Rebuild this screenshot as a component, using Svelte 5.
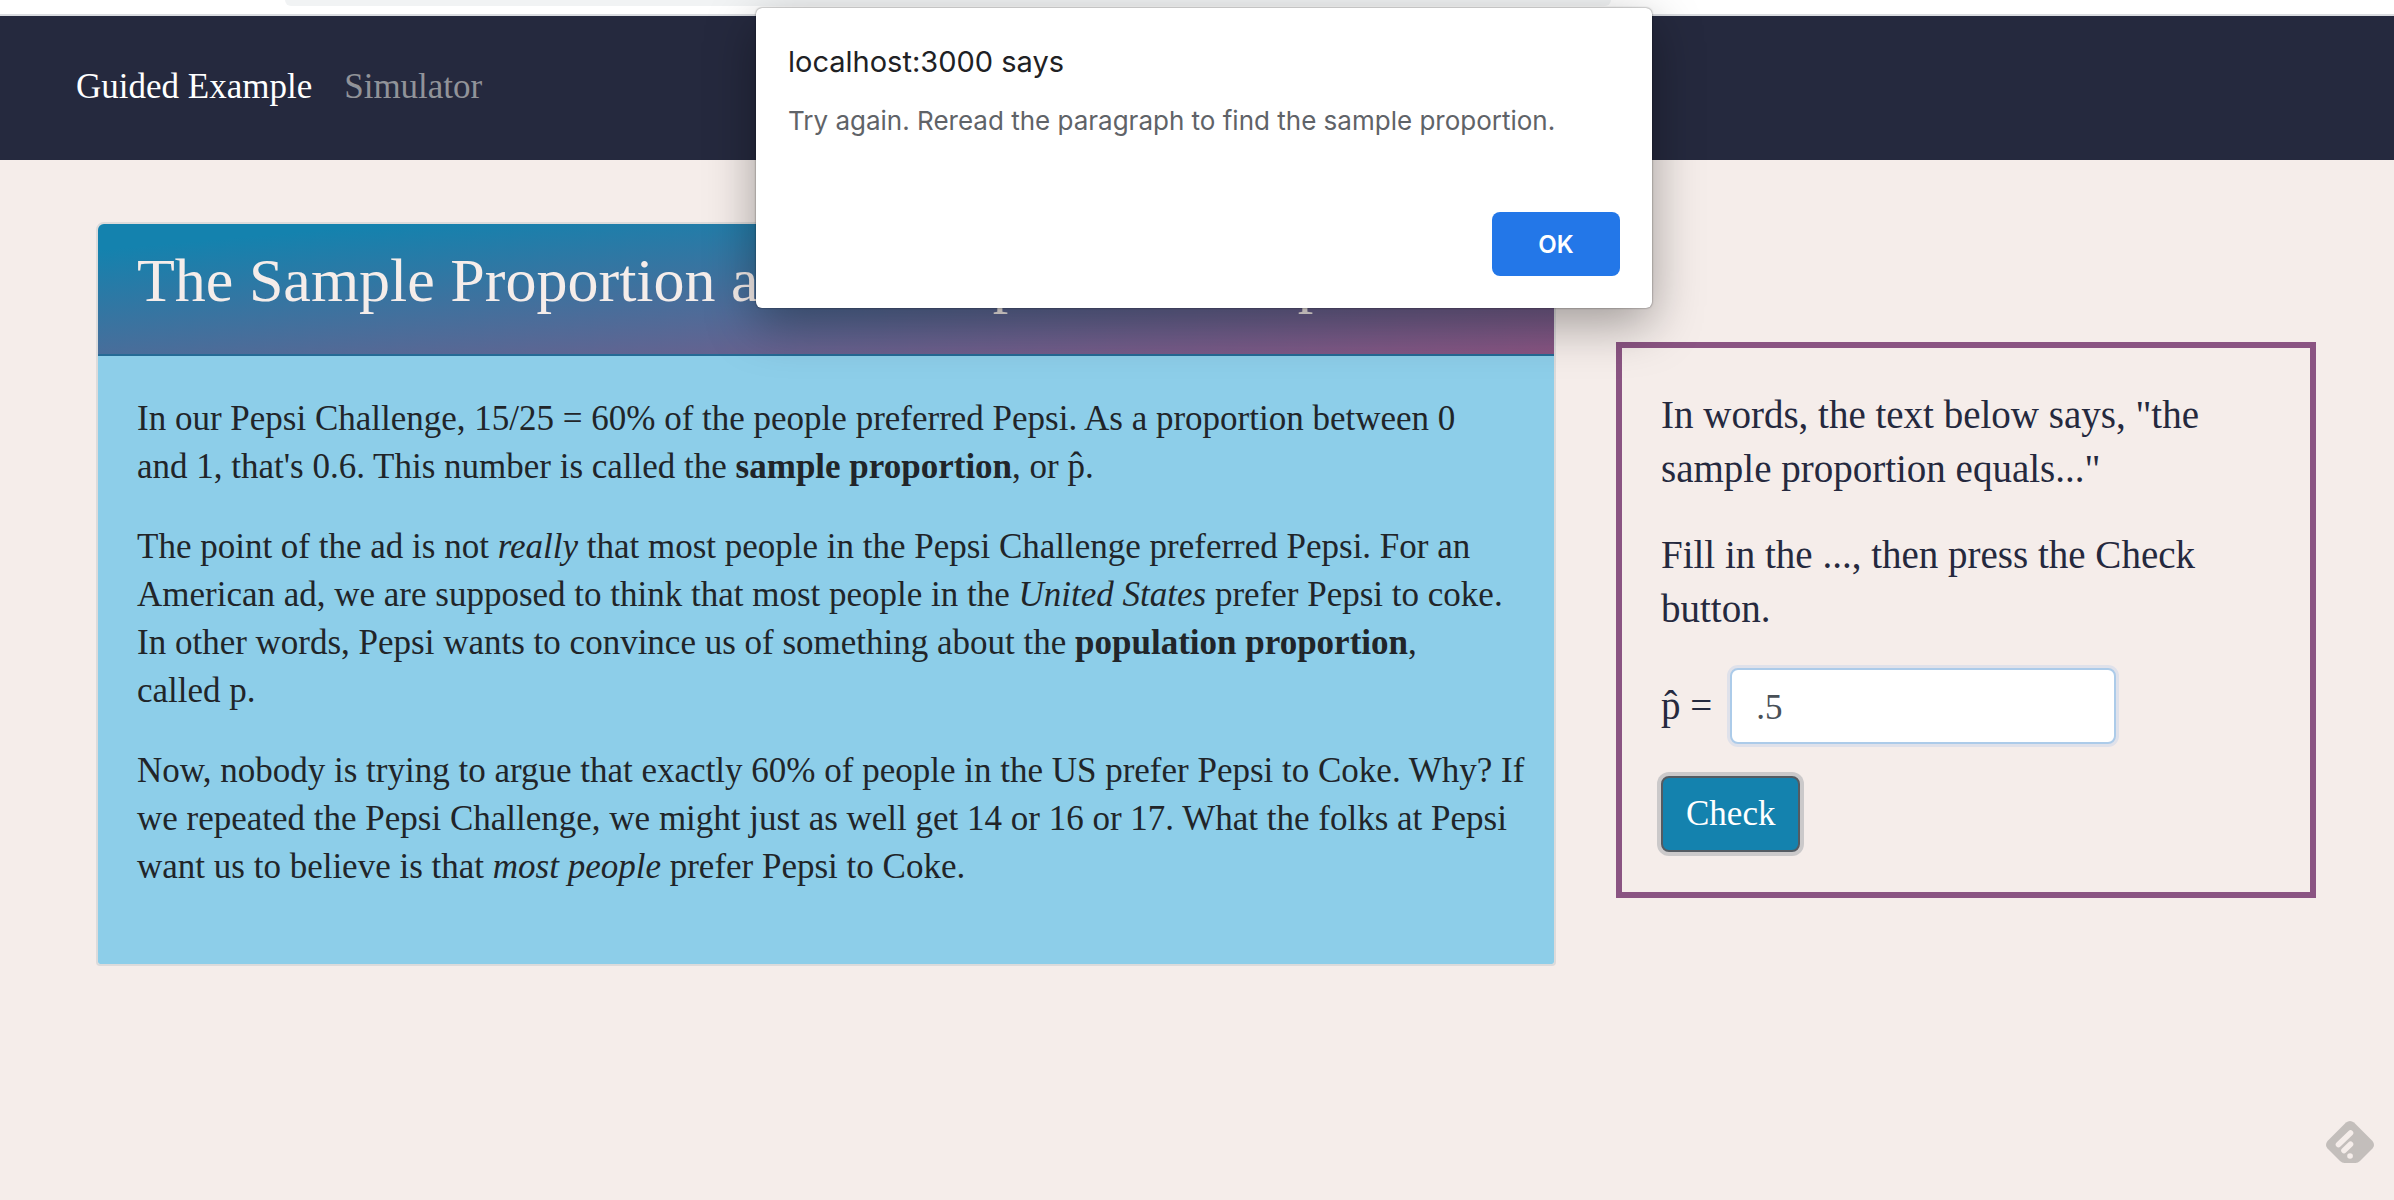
<script>
  let answer = $state('.5');
  let open = $state(true);
</script>

<div class="page">
  <div class="browser-edge"><div class="address"></div></div>
  <header class="navbar">
    <nav>
      <a class="active" href="#guided">Guided Example</a>
      <a href="#simulator">Simulator</a>
    </nav>
  </header>

  <main>
    <article class="card">
      <h1>The Sample Proportion and the Population Proportion</h1>
      <div class="card-body">
        <p>
          In our Pepsi Challenge, 15/25 = 60% of the people preferred Pepsi. As a proportion between 0<br />
          and 1, that's 0.6. This number is called the <strong>sample proportion</strong>, or p̂.
        </p>
        <p>
          The point of the ad is not <em>really</em> that most people in the Pepsi Challenge preferred Pepsi. For an<br />
          American ad, we are supposed to think that most people in the <em>United States</em> prefer Pepsi to coke.<br />
          In other words, Pepsi wants to convince us of something about the <strong>population proportion</strong>,<br />
          called p.
        </p>
        <p>
          Now, nobody is trying to argue that exactly 60% of people in the US prefer Pepsi to Coke. Why? If<br />
          we repeated the Pepsi Challenge, we might just as well get 14 or 16 or 17. What the folks at Pepsi<br />
          want us to believe is that <em>most people</em> prefer Pepsi to Coke.
        </p>
      </div>
    </article>

    <form class="exercise" onsubmit={(e) => { e.preventDefault(); open = true; }}>
      <p>In words, the text below says, "the<br /> sample proportion equals..."</p>
      <p>Fill in the ..., then press the Check<br /> button.</p>
      <div class="field">
        <label for="answer">p̂ =</label>
        <input id="answer" type="text" bind:value={answer} />
      </div>
      <button class="check" type="submit">Check</button>
    </form>
  </main>

  {#if open}
    <div class="dialog" role="alertdialog" aria-labelledby="dlg-title" aria-describedby="dlg-text">
      <h2 id="dlg-title">localhost:3000 says</h2>
      <p id="dlg-text">Try again. Reread the paragraph to find the sample proportion.</p>
      <button class="ok" type="button" onclick={() => (open = false)}>OK</button>
    </div>
  {/if}

  <button class="feedly" type="button" aria-label="Follow in feed reader">
    <svg viewBox="0 0 48 42" width="48" height="42">
      <path fill="#c3bebb" d="M20 1.6 Q24 -1.4 28 1.6 L46.500 20 Q49.500 24 46.500 27.500 L34 40 Q32 42 29.500 42 H18.500 Q16 42 14 40 L1.500 27.500 Q-1.500 24 1.500 20 Z" />
      <g stroke="#f5edea" stroke-width="5.600" stroke-linecap="round">
        <path d="M12.500 23.500 L24.500 12" />
        <path d="M18 29.500 L24.500 23.200" />
        <path d="M24 35 h.1" />
      </g>
    </svg>
  </button>
</div>

<style>
  :global(body) {
    background: #f5edea;
  }
  .page {
    position: relative;
    min-height: 100vh;
    overflow: hidden;
    box-sizing: border-box;
    font-family: Georgia, 'Liberation Serif', serif;
    font-size: 35px;
    line-height: 48px;
    color: #212529;
  }
  .browser-edge {
    height: 14px;
    background: #fff;
    border-bottom: 2px solid #dadce0;
  }
  .address {
    height: 6px;
    margin: 0 783px 0 285px;
    background: #f1f3f4;
    border-radius: 0 0 16px 16px;
  }
  .navbar {
    background: #25293e;
    height: 144px;
  }
  nav {
    display: flex;
    gap: 32px;
    padding: 47px 76px;
  }
  nav a {
    color: #919399;
    text-decoration: none;
  }
  nav a.active {
    color: #fff;
  }
  main {
    display: grid;
    grid-template-columns: 1460fr 700fr;
    gap: 60px;
    align-items: start;
    padding: 62px 78px 62px 96px;
  }
  .card {
    border: 2px solid #dcdbdb;
    border-radius: 8px 8px 4px 4px;
    background: #8dcee9;
    background-clip: padding-box;
    overflow: hidden;
    white-space: nowrap;
  }
  h1 {
    margin: 0;
    padding: 22px 39px 40px;
    border-bottom: 2px solid #256a95;
    background: linear-gradient(to bottom right, #1482ae 10%, #8a5482);
    color: #f5edea;
    font-weight: 400;
    font-size: 62px;
    line-height: 68px;
  }
  .card-body {
    padding: 39px 39px 41px;
  }
  p {
    margin: 0 0 32px;
  }
  .exercise {
    margin-top: 120px;
    padding: 40px 39px;
    border: 6px solid #8a5482;
    color: #25293e;
    font-size: 39px;
    line-height: 54px;
  }
  .field {
    display: flex;
    align-items: center;
    gap: 18px;
    margin-bottom: 32px;
  }
  .field input {
    box-sizing: border-box;
    width: 386px;
    height: 76px;
    padding: 14px 24px 10px;
    border: 2px solid #accbe9;
    border-radius: 8px;
    background: #fff;
    box-shadow: 0 0 0 3px #dfe1ea;
    color: #495057;
    font: inherit;
    font-size: 35px;
    outline: none;
  }
  .check {
    display: block;
    height: 76px;
    padding: 0 23px;
    border: 2px solid #545b62;
    border-radius: 8px;
    background: #1482ae;
    box-shadow: 0 0 0 4px #cbc9ca;
    color: #fff;
    font: inherit;
    font-size: 35px;
  }
  .dialog {
    position: absolute;
    top: 8px;
    left: 756px;
    box-sizing: border-box;
    width: 896px;
    height: 300px;
    padding: 32px;
    display: flex;
    flex-direction: column;
    border-radius: 6px;
    background: #fff;
    box-shadow: 0 0 2px rgba(0, 0, 0, 0.6), 0 16px 50px rgba(0, 0, 0, 0.35);
    font-family: Inter, sans-serif;
  }
  .dialog h2 {
    margin: 0 0 20px;
    color: #202124;
    font-weight: 400;
    font-size: 29px;
    line-height: 44px;
  }
  .dialog p {
    margin: 0;
    color: #5f6368;
    font-size: 26px;
    line-height: 34px;
  }
  .ok {
    align-self: flex-end;
    margin-top: auto;
    width: 128px;
    height: 64px;
    border: 0;
    border-radius: 8px;
    background: #2377e8;
    color: #fff;
    font: 600 24px Inter, sans-serif;
  }
  .feedly {
    position: absolute;
    right: 20px;
    bottom: 37px;
    padding: 0;
    border: 0;
    background: none;
  }
  .feedly svg {
    display: block;
  }
</style>
